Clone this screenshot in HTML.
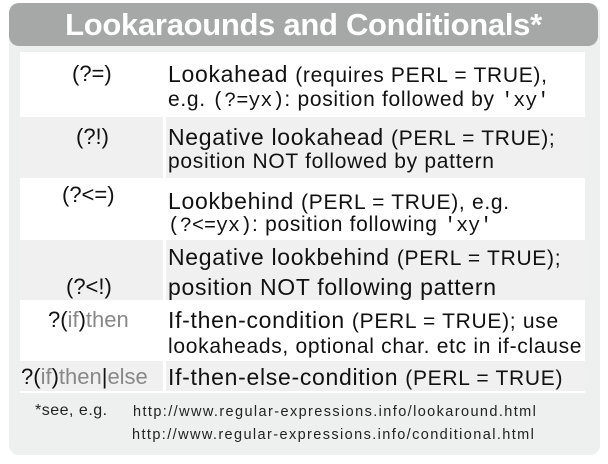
<!DOCTYPE html>
<html><head><meta charset="utf-8"><style>
body{margin:0;width:608px;height:464px;background:#fff;font-family:"Liberation Sans",Arial,sans-serif;position:relative;overflow:hidden}
.panel{position:absolute;left:9px;top:3px;width:591px;height:452px;background:#eeefef;border-radius:10px}
.hdr{position:absolute;left:9px;top:3px;width:589px;height:43px;background:#a6a8a8;border-radius:10px;color:#fff;font-weight:bold;font-size:31px;text-align:center;line-height:43px;letter-spacing:-0.3px}
.tbl{position:absolute;left:20px;top:52px;width:565px;height:341px;background:#fff}
.row{position:absolute;left:0;width:565px}
.l{position:absolute;left:0;width:143px;height:100%;font-size:22px;color:#111}
.r{position:absolute;left:146px;right:0;height:100%;font-size:23px;letter-spacing:0.7px;color:#111;padding-left:2px;box-sizing:border-box}
.g .l,.g .r{background:#f0f0f0}
.s{font-size:21px}
.m{font-family:"Liberation Mono",monospace;font-size:20px;letter-spacing:0}
.gr{color:#888}
.foot{position:absolute;color:#222;white-space:nowrap}
.ln{position:absolute;white-space:nowrap}
</style></head><body>
<div class="panel"></div>
<div class="hdr">Lookaraounds and Conditionals*</div>
<div class="tbl">
 <div class="row" style="top:0;height:65px"><div class="l"><span class="ln" style="left:52px;top:9px">(?=)</span></div><div class="r"><span class="ln" style="top:9px">Lookahead <span class="s">(requires PERL = TRUE),</span></span><span class="ln s" style="top:36px">e.g. <span class="m">(?=yx)</span>: position followed by <span class="m">'xy'</span></span></div></div>
 <div class="row g" style="top:65px;height:61px"><div class="l"><span class="ln" style="left:56px;top:7px">(?!)</span></div><div class="r"><span class="ln" style="top:7px">Negative lookahead <span class="s">(PERL = TRUE);</span></span><span class="ln s" style="top:33px">position NOT followed by pattern</span></div></div>
 <div class="row" style="top:126px;height:62px"><div class="l"><span class="ln" style="left:42px;top:4px">(?&lt;=)</span></div><div class="r"><span class="ln" style="top:10px">Lookbehind <span class="s">(PERL = TRUE), e.g.</span></span><span class="ln s" style="top:35px"><span class="m">(?&lt;=yx)</span>: position following <span class="m">'xy'</span></span></div></div>
 <div class="row g" style="top:188px;height:60px"><div class="l"><span class="ln" style="left:46px;top:34px">(?&lt;!)</span></div><div class="r"><span class="ln" style="top:4px">Negative lookbehind <span class="s">(PERL = TRUE);</span></span><span class="ln" style="top:34px">position NOT following pattern</span></div></div>
 <div class="row" style="top:248px;height:61px"><div class="l"><span class="ln" style="left:28px;top:7px">?(<span class="gr">if</span>)<span class="gr">then</span></span></div><div class="r"><span class="ln" style="top:7px">If-then-condition <span class="s">(PERL = TRUE); use</span></span><span class="ln s" style="top:35px">lookaheads, optional char. etc in if-clause</span></div></div>
 <div class="row g" style="top:309px;height:30px"><div class="l"><span class="ln" style="left:1px;top:3px">?(<span class="gr">if</span>)<span class="gr">then</span>|<span class="gr">else</span></span></div><div class="r"><span class="ln" style="top:3px">If-then-else-condition <span class="s">(PERL = TRUE)</span></span></div></div>
</div>
<div class="foot" style="left:35px;top:402px;font-size:16px;letter-spacing:0.5px">*see, e.g.</div>
<div class="foot" style="left:133px;top:404px;font-size:14.5px;letter-spacing:1.4px">http://www.regular-expressions.info/lookaround.html</div>
<div class="foot" style="left:132px;top:427px;font-size:14.5px;letter-spacing:1.4px">http://www.regular-expressions.info/conditional.html</div>
</body></html>
